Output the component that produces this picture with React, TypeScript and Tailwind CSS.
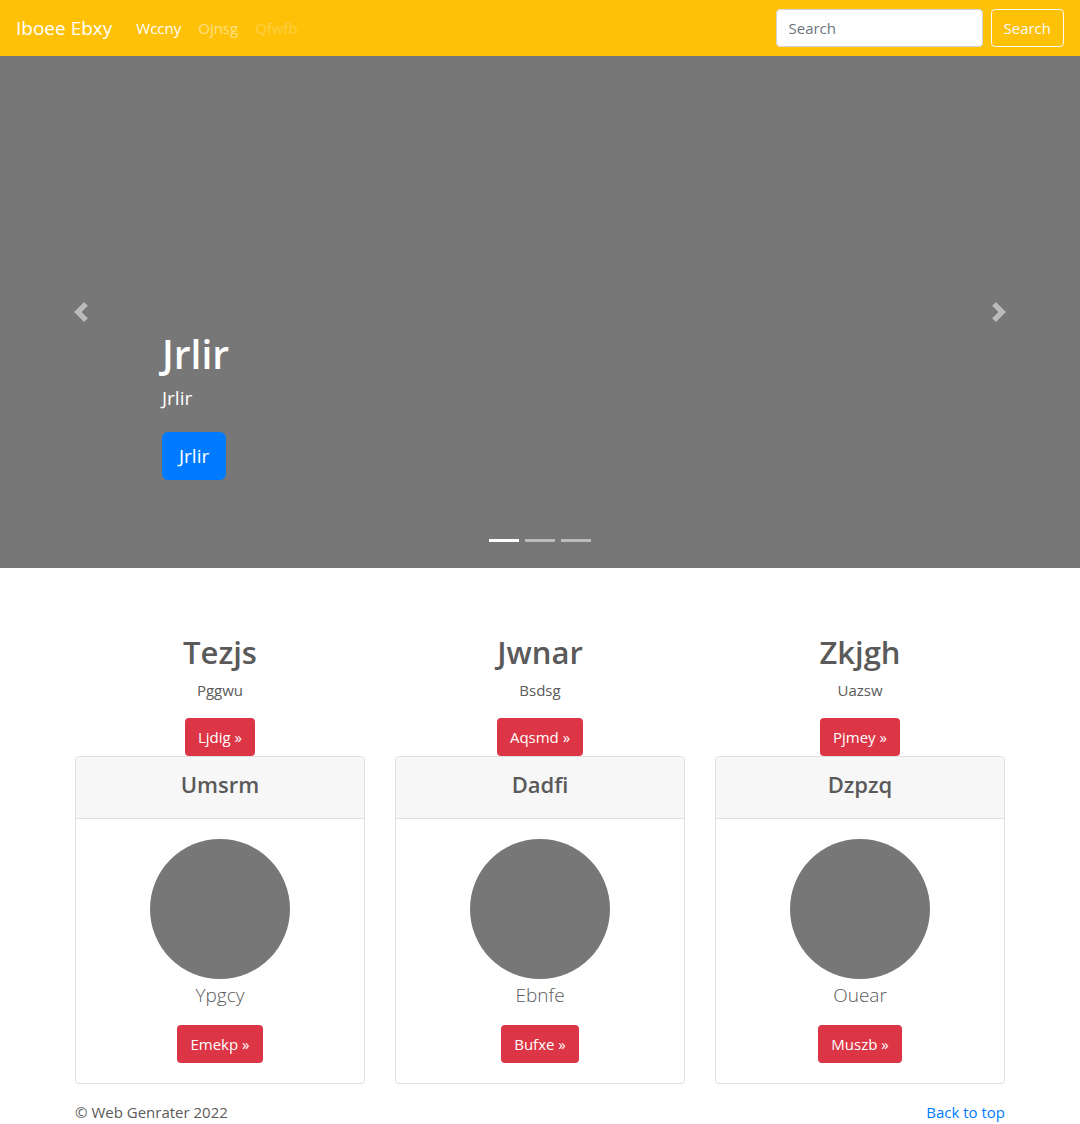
const features = [
  { title: "Tezjs", text: "Pggwu", action: "Ljdig", card: "Umsrm", caption: "Ypgcy", cardAction: "Emekp" },
  { title: "Jwnar", text: "Bsdsg", action: "Aqsmd", card: "Dadfi", caption: "Ebnfe", cardAction: "Bufxe" },
  { title: "Zkjgh", text: "Uazsw", action: "Pjmey", card: "Dzpzq", caption: "Ouear", cardAction: "Muszb" },
];

function Navbar() {
  return (
    <nav className="flex min-h-14 items-center bg-[#ffc107] px-4 py-2">
      <a href="#" className="mr-6 text-[19px] leading-[30px] text-white">
        Iboee Ebxy
      </a>
      <ul className="flex flex-1 gap-[17px]">
        <li>
          <a href="#" aria-current="page" className="text-white">
            Wccny
          </a>
        </li>
        <li>
          <a href="#" className="text-white/50">
            Ojnsg
          </a>
        </li>
        <li>
          <a href="#" aria-disabled="true" className="text-white/25">
            Qfwfb
          </a>
        </li>
      </ul>
      <form className="flex items-center gap-2" onSubmit={(e) => e.preventDefault()}>
        <input
          type="text"
          placeholder="Search"
          aria-label="Search"
          className="h-[38px] w-[207px] rounded border border-[#ced4da] bg-white px-3 text-[#495057] placeholder:text-[#6c757d]"
        />
        <button type="submit" className="h-[38px] rounded border border-[#f8f9fa] px-3 text-[#f8f9fa]">
          Search
        </button>
      </form>
    </nav>
  );
}

function Carousel() {
  return (
    <section className="relative flex h-[512px] flex-col justify-end bg-[#777] px-[15%] pb-[88px] text-white">
      <h1 className="mb-1.5 text-[39px] leading-[48px] font-semibold">Jrlir</h1>
      <p className="mb-5 text-[19px] leading-7">Jrlir</p>
      <div>
        <a href="#" className="inline-block rounded-md bg-[#007bff] px-[17px] py-[9px] text-[19px] leading-[30px]">
          Jrlir
        </a>
      </div>
      <button
        type="button"
        aria-label="Previous"
        className="absolute inset-y-0 left-0 flex w-[15%] items-center justify-center opacity-50"
      >
        <svg viewBox="0 0 8 8" className="size-5" fill="#fff">
          <path d="M5.25 0l-4 4 4 4 1.5-1.5-2.5-2.5 2.5-2.5-1.5-1.5z" />
        </svg>
      </button>
      <button
        type="button"
        aria-label="Next"
        className="absolute inset-y-0 right-0 flex w-[15%] items-center justify-center opacity-50"
      >
        <svg viewBox="0 0 8 8" className="size-5" fill="#fff">
          <path d="M2.75 0l-1.5 1.5 2.5 2.5-2.5 2.5 1.5 1.5 4-4-4-4z" />
        </svg>
      </button>
      <div className="absolute inset-x-0 bottom-[26px] flex justify-center gap-1.5">
        <button type="button" aria-label="Slide 1" className="h-[3px] w-[30px] bg-white" />
        <button type="button" aria-label="Slide 2" className="h-[3px] w-[30px] bg-white/50" />
        <button type="button" aria-label="Slide 3" className="h-[3px] w-[30px] bg-white/50" />
      </div>
    </section>
  );
}

function ActionLink({ label }: { label: string }) {
  return (
    <a href="#" className="inline-block rounded bg-[#dc3545] px-[13px] py-[7px] text-white">
      {label} »
    </a>
  );
}

export default function App() {
  return (
    <div className="bg-white font-['Segoe_UI','Open_Sans',sans-serif] text-[15px] leading-6 text-[#5a5a5a]">
      <Navbar />
      <Carousel />
      <main className="mx-auto max-w-[960px] px-[15px] pt-16">
        <div className="grid grid-cols-3 gap-[30px] text-center">
          {features.map((f) => (
            <section key={f.title} className="flex flex-col items-center">
              <h2 className="mb-1.5 text-[31px] leading-10 font-semibold">{f.title}</h2>
              <p className="mb-4">{f.text}</p>
              <ActionLink label={f.action} />
              <div className="w-full overflow-hidden rounded border border-[#dfdfdf]">
                <div className="border-b border-[#dfdfdf] bg-[#f7f7f7] pt-3 pb-[19px]">
                  <h3 className="text-[22px] leading-[30px] font-semibold">{f.card}</h3>
                </div>
                <div className="flex flex-col items-center p-5">
                  <div className="size-[140px] rounded-full bg-[#777]" />
                  <p className="mb-3.5 text-[19px] leading-8 font-light">{f.caption}</p>
                  <ActionLink label={f.cardAction} />
                </div>
              </div>
            </section>
          ))}
        </div>
      </main>
      <footer className="mx-auto flex max-w-[960px] justify-between px-[15px] pt-4">
        <p>© Web Genrater 2022</p>
        <a href="#" className="text-[#007bff]">
          Back to top
        </a>
      </footer>
    </div>
  );
}
